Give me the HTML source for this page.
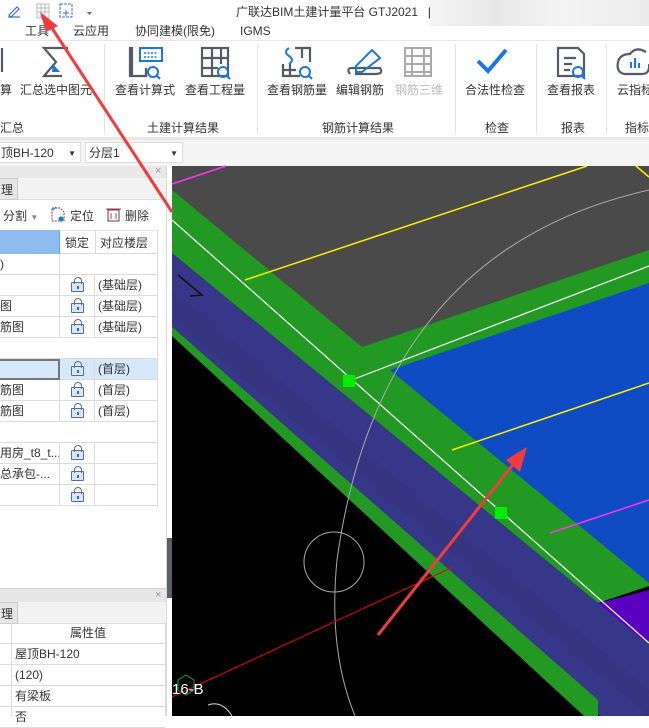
<!DOCTYPE html>
<html><head><meta charset="utf-8">
<style>
*{margin:0;padding:0;box-sizing:border-box}
body{width:649px;height:716px;overflow:hidden;background:#fff;font-family:"Liberation Sans","Noto Sans CJK SC",sans-serif;font-size:12px;color:#333;position:relative}
div,span{white-space:nowrap}
.a{position:absolute;white-space:nowrap;line-height:16px}
.sep{position:absolute;top:44px;width:1px;height:90px;background:#e2e2e2}
.lbl{position:absolute;top:82px;font-size:12px;color:#333;line-height:16px}
.grp{position:absolute;top:120px;font-size:12px;color:#333;line-height:16px}
.row{position:absolute;left:0;width:157px;height:21px;border-bottom:1px solid #dcdcdc}
.row .c1{position:absolute;left:0;width:60px;height:21px;border-right:1px solid #dcdcdc;line-height:20px;overflow:hidden}
.row .c2{position:absolute;left:60px;width:35px;height:21px;border-right:1px solid #dcdcdc}
.row .c3{position:absolute;left:98px;line-height:20px}
.lock{position:absolute;left:11px;width:13px;height:10px;border:1px solid #5a6d8a;background:#d9e6f7;border-radius:1px;top:7px}
.lock:before{content:"";position:absolute;left:2px;top:-6px;width:6px;height:6px;border:1px solid #5a6d8a;border-bottom:none;border-radius:4px 4px 0 0}
.lock:after{content:"";position:absolute;left:5px;top:3px;width:2px;height:3px;background:#1c6fd8}
.prow{position:absolute;left:0;width:165px;height:21px;border-bottom:1px solid #dcdcdc}
.prow span{position:absolute;left:15px;line-height:21px}
</style></head><body>
<svg class="a" style="left:6px;top:3px" width="90" height="16">
<path d="M3 12 L11 4 L13 6 L5 14 Z M2 14 H14" stroke="#3a6fc4" fill="none" stroke-width="1.2"/>
<rect x="31" y="1" width="12" height="14" fill="none" stroke="#bbb"/><path d="M31 5H43M31 9H43M35 1V15M39 1V15" stroke="#bbb"/>
<rect x="54" y="1" width="12" height="13" fill="none" stroke="#3a6fc4" stroke-dasharray="3 1"/><path d="M57 10H63M60 7V13" stroke="#3a6fc4"/>
<path d="M81 9h5l-2.5 3z" fill="#666"/>
</svg>
<div class="a" style="left:236px;top:4px;font-size:12px;color:#333">广联达BIM土建计量平台 GTJ2021&nbsp;&nbsp; [</div>
<div class="a" style="left:430px;top:0;width:219px;height:26px;background:linear-gradient(90deg,#f4f4f4,#e8e8e8 30%,#f3f3f3 60%,#ececec)"></div>
<div class="a" style="left:25px;top:23px">工具</div>
<div class="a" style="left:73px;top:23px">云应用</div>
<div class="a" style="left:135px;top:23px">协同建模(限免)</div>
<div class="a" style="left:240px;top:23px">IGMS</div>
<div class="a" style="left:0;top:40px;width:649px;height:1px;background:#e6e6e6"></div>
<svg class="a" style="left:0;top:44px" width="649" height="36">
<g stroke="#555b66" stroke-width="2.2" fill="none">
<path d="M2 4V28"/>
<path d="M68 4H44L56 18L44 32H62"/>
<rect x="130" y="4" width="2" height="28"/><path d="M131 32H146V24"/>
<rect x="202" y="4" width="26" height="28"/><path d="M202 14H228M202 24H218M212 4V32M221 4V20"/>
<path d="M283 20V32H300M290 20V32M283 26H296M295 4H310V18M302 4V14"/>
<path d="M355 30H375M350 30Q346 24 352 24H380Q384 30 375 30"/>
<path d="M562 4H578L584 10V32H558V4Z M564 14H576M564 20H572M564 26H570"/>
<path d="M624 30H642Q650 30 649 20 M624 30Q616 28 618 18Q620 10 630 10Q636 2 646 8"/>
</g>
<g stroke="#aaa" stroke-width="2" fill="none"><rect x="405" y="4" width="26" height="28"/><path d="M405 12H431M405 20H431M405 28H431M412 4V32M424 4V32"/></g>
<path d="M53 20L60 28H52Z" fill="#1b76e0"/>
<rect x="140" y="4" width="22" height="13" fill="#fff" stroke="#1b76e0" stroke-width="2"/>
<path d="M144 9h14M144 13h14" stroke="#1b76e0" stroke-dasharray="2 1.5" stroke-width="1.5"/>
<path d="M372 6L380 14L362 28L356 28L356 22Z" fill="none" stroke="#1b76e0" stroke-width="2"/>
<path d="M289 4q-6 4 0 8q6 4 0 8" stroke="#1b76e0" stroke-width="2" fill="none"/>
<path d="M478 17L488 27L506 6" stroke="#1b76e0" stroke-width="4" fill="none"/>
<path d="M631 24V18M635 24V14M639 24V19" stroke="#1b76e0" stroke-width="2"/>
<g stroke="#1b76e0" stroke-width="2" fill="none">
<circle cx="153" cy="28" r="5"/><path d="M157 32L160 35"/>
<circle cx="223" cy="28" r="5"/><path d="M227 32L230 35"/>
<circle cx="305" cy="28" r="5"/><path d="M309 32L312 35"/>
<circle cx="578" cy="28" r="5"/><path d="M582 32L585 35"/>
</g>
</svg>
<div class="lbl" style="left:0">算</div>
<div class="lbl" style="left:20px">汇总选中图元</div>
<div class="lbl" style="left:115px">查看计算式</div>
<div class="lbl" style="left:185px">查看工程量</div>
<div class="lbl" style="left:267px">查看钢筋量</div>
<div class="lbl" style="left:336px">编辑钢筋</div>
<div class="lbl" style="left:395px;color:#bbb">钢筋三维</div>
<div class="lbl" style="left:465px">合法性检查</div>
<div class="lbl" style="left:547px">查看报表</div>
<div class="lbl" style="left:617px;width:60px">云指标</div>
<div class="grp" style="left:0">汇总</div>
<div class="grp" style="left:147px">土建计算结果</div>
<div class="grp" style="left:322px">钢筋计算结果</div>
<div class="grp" style="left:485px">检查</div>
<div class="grp" style="left:561px">报表</div>
<div class="grp" style="left:625px;width:40px">指标</div>
<div class="sep" style="left:104px"></div><div class="sep" style="left:257px"></div><div class="sep" style="left:455px"></div><div class="sep" style="left:536px"></div><div class="sep" style="left:606px"></div>
<div class="a" style="left:0;top:137px;width:649px;height:3px;background:#e8e8e8"></div>
<div class="a" style="left:0;top:140px;width:649px;height:26px;background:#f4f4f4"></div>
<div class="a" style="left:-2px;top:142px;width:83px;height:21px;background:#fff;border:1px solid #ddd;padding:2px 0 0 2px">顶BH-120<span style="position:absolute;right:4px;top:3px;font-size:8px">▼</span></div>
<div class="a" style="left:85px;top:142px;width:98px;height:21px;background:#fff;border:1px solid #ddd;padding:2px 0 0 3px">分层1<span style="position:absolute;right:4px;top:3px;font-size:8px">▼</span></div>
<div class="a" style="left:0;top:166px;width:167px;height:550px;background:#fff"></div>
<div class="a" style="left:0;top:166px;width:167px;height:12px;background:#e8e8e8"></div>
<div class="a" style="left:155px;top:163px;color:#999;font-size:11px">×</div>
<div class="a" style="left:0;top:178px;width:167px;height:22px;background:#f2f2f2;border-bottom:1px solid #ddd"></div>
<div class="a" style="left:-4px;top:178px;width:22px;height:22px;background:#e6e6e6;border:1px solid #ccc;padding:3px 0 0 4px">理</div>
<div class="a" style="left:3px;top:208px">分割 <span style="font-size:8px;color:#888">▼</span></div>
<svg class="a" style="left:49px;top:205px" width="110" height="18"><path d="M3 3H11L15 7V16H3Z" fill="none" stroke="#555" stroke-dasharray="2 1"/><circle cx="12" cy="14" r="2.5" fill="#1b76e0"/><path d="M4 5L7 2" stroke="#1b76e0"/><rect x="59" y="5" width="11" height="11" fill="none" stroke="#444"/><path d="M57 4H72M62 8V14M67 8V14" stroke="#c33"/></svg>
<div class="a" style="left:70px;top:208px">定位</div>
<div class="a" style="left:125px;top:208px">删除</div>
<div class="a" style="left:0;top:230px;width:157px;height:24px;border-bottom:1px solid #dcdcdc;border-top:1px solid #e6e6e6"></div>
<div class="a" style="left:0;top:230px;width:60px;height:24px;background:#8fbcef;border-right:1px solid #6aa2e4"></div>
<div class="a" style="left:65px;top:235px">锁定</div><div class="a" style="left:95px;top:230px;width:1px;height:24px;background:#dcdcdc"></div>
<div class="a" style="left:100px;top:235px">对应楼层</div>
<div class="row" style="top:254px"><div class="c1">)</div></div>
<div class="row" style="top:275px"><div class="c1"></div><div class="c2"><div class="lock"></div></div><div class="c3">(基础层)</div></div>
<div class="row" style="top:296px"><div class="c1">图</div><div class="c2"><div class="lock"></div></div><div class="c3">(基础层)</div></div>
<div class="row" style="top:317px"><div class="c1">筋图</div><div class="c2"><div class="lock"></div></div><div class="c3">(基础层)</div></div>
<div class="row" style="top:338px"></div>
<div class="row" style="top:359px;background:#d6e8fb"><div class="c1" style="border:2px solid #777;border-left:none"></div><div class="c2"><div class="lock"></div></div><div class="c3">(首层)</div></div>
<div class="row" style="top:380px"><div class="c1">筋图</div><div class="c2"><div class="lock"></div></div><div class="c3">(首层)</div></div>
<div class="row" style="top:401px"><div class="c1">筋图</div><div class="c2"><div class="lock"></div></div><div class="c3">(首层)</div></div>
<div class="row" style="top:422px"></div>
<div class="row" style="top:443px"><div class="c1">用房_t8_t...</div><div class="c2"><div class="lock"></div></div></div>
<div class="row" style="top:464px"><div class="c1">总承包-...</div><div class="c2"><div class="lock"></div></div></div>
<div class="row" style="top:485px"><div class="c1"></div><div class="c2"><div class="lock"></div></div></div>
<div class="a" style="left:157px;top:230px;width:1px;height:277px;background:#dcdcdc"></div>
<div class="a" style="left:166px;top:166px;width:1px;height:550px;background:#d8d8d8"></div>
<div class="a" style="left:167px;top:538px;width:5px;height:60px;background:#5a5f6a"></div>
<div class="a" style="left:0;top:588px;width:166px;height:14px;background:#e6e6e6;border-top:1px solid #d0d0d0"></div>
<div class="a" style="left:155px;top:587px;color:#999;font-size:11px">×</div>
<div class="a" style="left:0;top:602px;width:166px;height:22px;background:#f2f2f2;border-bottom:1px solid #ddd"></div>
<div class="a" style="left:-4px;top:602px;width:22px;height:22px;background:#e6e6e6;border:1px solid #ccc;padding:3px 0 0 4px">理</div>
<div class="prow" style="top:623px"><span style="left:70px">属性值</span></div>
<div class="prow" style="top:644px"><span>屋顶BH-120</span></div>
<div class="prow" style="top:665px"><span>(120)</span></div>
<div class="prow" style="top:686px"><span>有梁板</span></div>
<div class="prow" style="top:707px"><span>否</span></div>
<div class="a" style="left:11px;top:623px;width:1px;height:93px;background:#dcdcdc"></div>
<div class="a" style="left:165px;top:623px;width:1px;height:93px;background:#dcdcdc"></div>
<svg class="a" style="left:0;top:0" width="649" height="716">
<rect x="172" y="166" width="477" height="550" fill="#000"/>
<polygon points="172,253 598,603 649,640 649,716 600,716 172,330" fill="#37378a"/>
<polygon points="172,290 649,690 649,716 172,320" fill="#33337a" opacity=".6"/>
<polygon points="172,327 598,700 598,716 584,716 172,336" fill="#229922"/>
<polygon points="172,190 649,190 649,586 598,603 172,253" fill="#229922"/>
<polygon points="172,166 649,166 649,250 362,347 172,190" fill="#4a4a4a"/>
<polygon points="390,370 649,283 649,583" fill="#0f4cc4"/>
<polygon points="598,603 649,590 649,640 643,640" fill="#5a00c0"/>
<path d="M172,220 L649,643 M349,381 L649,266" stroke="#fff" stroke-width="1.2"/>
<path d="M245,280 L587,166 M452,450 L649,383 M636,166 L649,177" stroke="#ffee00" stroke-width="1.5"/>
<path d="M172,184 L226,166 M550,533 L649,500" stroke="#ff33ee" stroke-width="1.5"/>
<rect x="343" y="375" width="12" height="12" fill="#00ee00"/>
<rect x="495" y="507" width="12" height="12" fill="#00ee00"/>
<path d="M649,190 Q380,250 337,560 Q328,650 355,716" stroke="#aaa" fill="none"/>
<circle cx="334" cy="562" r="30" stroke="#aaa" fill="none"/>
<path d="M172,697 L453,567" stroke="#e00" stroke-width="1"/>
<path d="M178,275 L202,295 L190,296" stroke="#111" stroke-width="1.5" fill="none"/>
<polygon points="186,675 194,680 194,690 186,695 178,690 178,680" fill="none" stroke="#0a5"/>
<text x="172" y="694" fill="#fff" font-size="15" font-family="Liberation Sans">16-B</text>
<path d="M208,705 Q222,700 232,716" stroke="#ccc" fill="none"/>
<path d="M172,212 L48,22" stroke="#f03c3c" stroke-width="3"/>
<polygon points="40,12 58,26 46,32" fill="#f03c3c"/>
<path d="M378,635 L515,462" stroke="#f03c3c" stroke-width="3"/>
<polygon points="527,447 520,472 506,460" fill="#f03c3c"/>
</svg>
</body></html>
